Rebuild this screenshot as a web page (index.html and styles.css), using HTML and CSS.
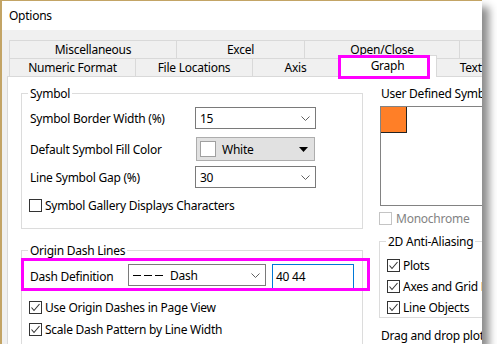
FILE: index.html
```html
<!DOCTYPE html>
<html lang="en">
<head>
    <meta charset="UTF-8">
    <title>Options</title>
    <link rel="stylesheet" href="styles.css">
</head>
<body>
    <div class="window">
        <div class="titlebar">Options</div>
        <div class="client">
            <div class="tabs">
                <div class="tab-row">
                    <div class="tab t-misc">Miscellaneous</div>
                    <div class="tab t-excel">Excel</div>
                    <div class="tab t-open">Open/Close</div>
                    <div class="tab t-more"></div>
                </div>
                <div class="tab-row">
                    <div class="tab t-num">Numeric Format</div>
                    <div class="tab t-file">File Locations</div>
                    <div class="tab t-axis">Axis</div>
                    <div class="tab t-graph active">Graph</div>
                    <div class="tab t-text">Text Fonts</div>
                </div>
                <div class="mark mark-tab"></div>
            </div>

            <div class="panel">
                <div class="col-left">
                    <fieldset class="group g-symbol">
                        <legend>Symbol</legend>
                        <div class="row r1">
                            <span class="lbl">Symbol Border Width (%)</span>
                            <div class="combo c-sym">
                                <span>15</span>
                                <svg class="chev" width="9" height="5" viewBox="0 0 9 5"><polyline points="0.5,0.5 4.5,4.5 8.5,0.5" fill="none" stroke="#606060"/></svg>
                            </div>
                        </div>
                        <div class="row r2">
                            <span class="lbl">Default Symbol Fill Color</span>
                            <div class="colorbtn">
                                <span class="swatch"></span>
                                <span>White</span>
                                <svg class="tri" width="9" height="5" viewBox="0 0 9 5"><polygon points="0,0 9,0 4.5,5" fill="#000"/></svg>
                            </div>
                        </div>
                        <div class="row r3">
                            <span class="lbl">Line Symbol Gap (%)</span>
                            <div class="combo c-sym">
                                <span>30</span>
                                <svg class="chev" width="9" height="5" viewBox="0 0 9 5"><polyline points="0.5,0.5 4.5,4.5 8.5,0.5" fill="none" stroke="#606060"/></svg>
                            </div>
                        </div>
                        <div class="check r4">
                            <span class="cb"></span>
                            <span>Symbol Gallery Displays Characters</span>
                        </div>
                    </fieldset>

                    <fieldset class="group g-dash">
                        <legend>Origin Dash Lines</legend>
                        <div class="row dash-row">
                            <span class="lbl lbl-dash">Dash Definition</span>
                            <div class="combo c-dash">
                                <svg class="dashes" width="30" height="3" viewBox="0 0 30 3"><line x1="0" y1="1.5" x2="30" y2="1.5" stroke="#000" stroke-width="1.2" stroke-dasharray="8 3"/></svg>
                                <span>Dash</span>
                                <svg class="chev" width="9" height="5" viewBox="0 0 9 5"><polyline points="0.5,0.5 4.5,4.5 8.5,0.5" fill="none" stroke="#606060"/></svg>
                            </div>
                            <div class="textbox">40 44</div>
                            <div class="mark mark-dash"></div>
                        </div>
                        <div class="check d1">
                            <span class="cb on"><svg width="11" height="11" viewBox="0 0 11 11"><polyline points="1.5,5.5 4,8.5 9.5,2" fill="none" stroke="#333" stroke-width="1.1"/></svg></span>
                            <span>Use Origin Dashes in Page View</span>
                        </div>
                        <div class="check d2">
                            <span class="cb on"><svg width="11" height="11" viewBox="0 0 11 11"><polyline points="1.5,5.5 4,8.5 9.5,2" fill="none" stroke="#333" stroke-width="1.1"/></svg></span>
                            <span>Scale Dash Pattern by Line Width</span>
                        </div>
                    </fieldset>
                </div>

                <div class="col-right">
                    <div class="uds-label">User Defined Symbols</div>
                    <div class="uds-box">
                        <span class="uds-item"></span>
                    </div>
                    <div class="check mono">
                        <span class="cb off"></span>
                        <span>Monochrome</span>
                    </div>
                    <fieldset class="group g-aa">
                        <legend>2D Anti-Aliasing</legend>
                        <div class="check a1">
                            <span class="cb on"><svg width="11" height="11" viewBox="0 0 11 11"><polyline points="1.5,5.5 4,8.5 9.5,2" fill="none" stroke="#333" stroke-width="1.1"/></svg></span>
                            <span>Plots</span>
                        </div>
                        <div class="check a2">
                            <span class="cb on"><svg width="11" height="11" viewBox="0 0 11 11"><polyline points="1.5,5.5 4,8.5 9.5,2" fill="none" stroke="#333" stroke-width="1.1"/></svg></span>
                            <span>Axes and Grid Lines</span>
                        </div>
                        <div class="check a3">
                            <span class="cb on"><svg width="11" height="11" viewBox="0 0 11 11"><polyline points="1.5,5.5 4,8.5 9.5,2" fill="none" stroke="#333" stroke-width="1.1"/></svg></span>
                            <span>Line Objects</span>
                        </div>
                    </fieldset>
                    <div class="drag">Drag and drop plot</div>
                </div>
            </div>
        </div>
    </div>
</body>
</html>
```

FILE: styles.css
```css
* {
    box-sizing: border-box;
}

body {
    margin: 0;
    background: #fff;
    font-family: "Noto Sans", "Open Sans", sans-serif;
    font-size: 12px;
    line-height: 15px;
    letter-spacing: -0.25px;
    color: #000;
}

.window {
    width: 482px;
    height: 344px;
    border-left: 2px solid #c3a465;
    border-top: 1px solid #c3a465;
    background: #f0f0f0;
    box-shadow: 7px 7px 8px rgba(0,0,0,0.45);
    overflow: hidden;
    display: flex;
    flex-direction: column;
}

.titlebar {
    height: 29px;
    flex: none;
    background: #fff;
    padding-left: 7px;
    display: flex;
    align-items: center;
}

.client {
    flex: 1;
    padding-top: 10px;
    overflow: hidden;
}

/* tabs */
.tabs {
    position: relative;
    margin-left: 7px;
}

.tab-row {
    display: flex;
    height: 18px;
}

.tab {
    flex: none;
    height: 18px;
    border-top: 1px solid #d9d9d9;
    border-left: 1px solid #d9d9d9;
    background: #f0f0f0;
    text-align: center;
    line-height: 17px;
    white-space: nowrap;
    overflow: hidden;
}

.t-misc { width: 167px; }
.t-excel { width: 128px; }
.t-open { width: 155px; }
.t-more { width: 100px; }
.t-num { width: 126px; }
.t-file { width: 117px; }
.t-axis { width: 86px; }
.t-graph { width: 99px; }
.t-text { width: 100px; border-left: none; }

.tab.active {
    position: relative;
    z-index: 1;
    margin-top: -3px;
    height: 22px;
    background: #fff;
    border-right: 1px solid #d9d9d9;
    line-height: 15px;
    padding-top: 2px;
}

.mark {
    position: absolute;
    border: 3px solid #f0f;
    z-index: 2;
}

.mark-tab {
    left: 329px;
    top: 15px;
    width: 92px;
    height: 24px;
}

/* page */
.panel {
    width: 600px;
    height: 300px;
    margin-left: 5px;
    background: #fff;
    border: 1px solid #d9d9d9;
    padding: 9px 0 0 13px;
    display: flex;
    gap: 16px;
}

.col-left {
    width: 342px;
    flex: none;
}

.col-right {
    width: 200px;
    flex: none;
    white-space: nowrap;
}

.group {
    margin: 0;
    padding: 0 0 0 8px;
    border: 1px solid #dcdcdc;
    min-width: 0;
}

.group legend {
    padding: 0 2px;
    margin-left: -2px;
    line-height: 15px;
}

.g-symbol {
    padding-bottom: 15px;
}

.g-dash {
    margin-top: 14px;
    height: 120px;
}

.row {
    display: flex;
    align-items: center;
}

.lbl {
    width: 165px;
    flex: none;
}

.r1 { margin-top: 6px; }
.r2 { margin-top: 8px; }
.r3 { margin-top: 5px; }

.combo {
    height: 22px;
    border: 1px solid #7a7a7a;
    background: #fff;
    display: flex;
    align-items: center;
    padding: 0 5px 0 4px;
}

.c-sym { width: 121px; }

.chev {
    margin-left: auto;
}

.colorbtn {
    width: 119px;
    height: 24px;
    margin-left: 1px;
    background: #e1e1e1;
    border: 1px solid #adadad;
    display: flex;
    align-items: center;
    padding: 0 6px 0 3px;
}

.swatch {
    width: 16px;
    height: 16px;
    background: #fff;
    border: 1px solid #a0a0a0;
    margin-right: 6px;
}

.tri {
    margin-left: auto;
}

.check {
    display: flex;
    align-items: center;
    height: 15px;
}

.cb {
    width: 13px;
    height: 13px;
    flex: none;
    border: 1px solid #333;
    background: #fff;
    margin-right: 3px;
    display: flex;
    align-items: center;
    justify-content: center;
}

.r4 { margin-top: 10px; margin-left: -1px; }

/* dash lines */
.dash-row {
    position: relative;
    margin-top: 6px;
    height: 26px;
    align-items: flex-start;
}

.lbl-dash {
    width: 98px;
    margin-top: 5px;
}

.c-dash {
    width: 138px;
    margin-right: 6px;
}

.dashes {
    margin-right: 7px;
}

.textbox {
    width: 82px;
    height: 26px;
    border: 1px solid #0078d7;
    padding: 4px 0 0 3px;
}

.mark-dash {
    left: -9px;
    top: -6px;
    width: 349px;
    height: 33px;
}

.d1 { margin-top: 10px; margin-left: -1px; }
.d2 { margin-top: 7px; margin-left: -1px; }

/* right column */
.uds-label {
    padding-left: 2px;
}

.uds-box {
    margin: 5px 0 0 1px;
    width: 160px;
    height: 100px;
    border: 1px solid #828282;
}

.uds-item {
    display: block;
    width: 26px;
    height: 26px;
    background: #ff7f27;
    border-right: 1px solid #222;
    border-bottom: 1px solid #222;
}

.mono {
    margin-top: 5px;
    color: #838383;
}

.mono .cb {
    border-color: #c4c4c4;
    margin-right: 4px;
}

.g-aa {
    margin-top: 8px;
    padding: 0 0 2px 7px;
    width: 160px;
}

.g-aa legend {
    margin-left: -1px;
}

.a1 { margin-top: 9px; }
.a2 { margin-top: 6px; }
.a3 { margin-top: 6px; }

.drag {
    margin-top: 10px;
    padding-left: 2px;
}
```
